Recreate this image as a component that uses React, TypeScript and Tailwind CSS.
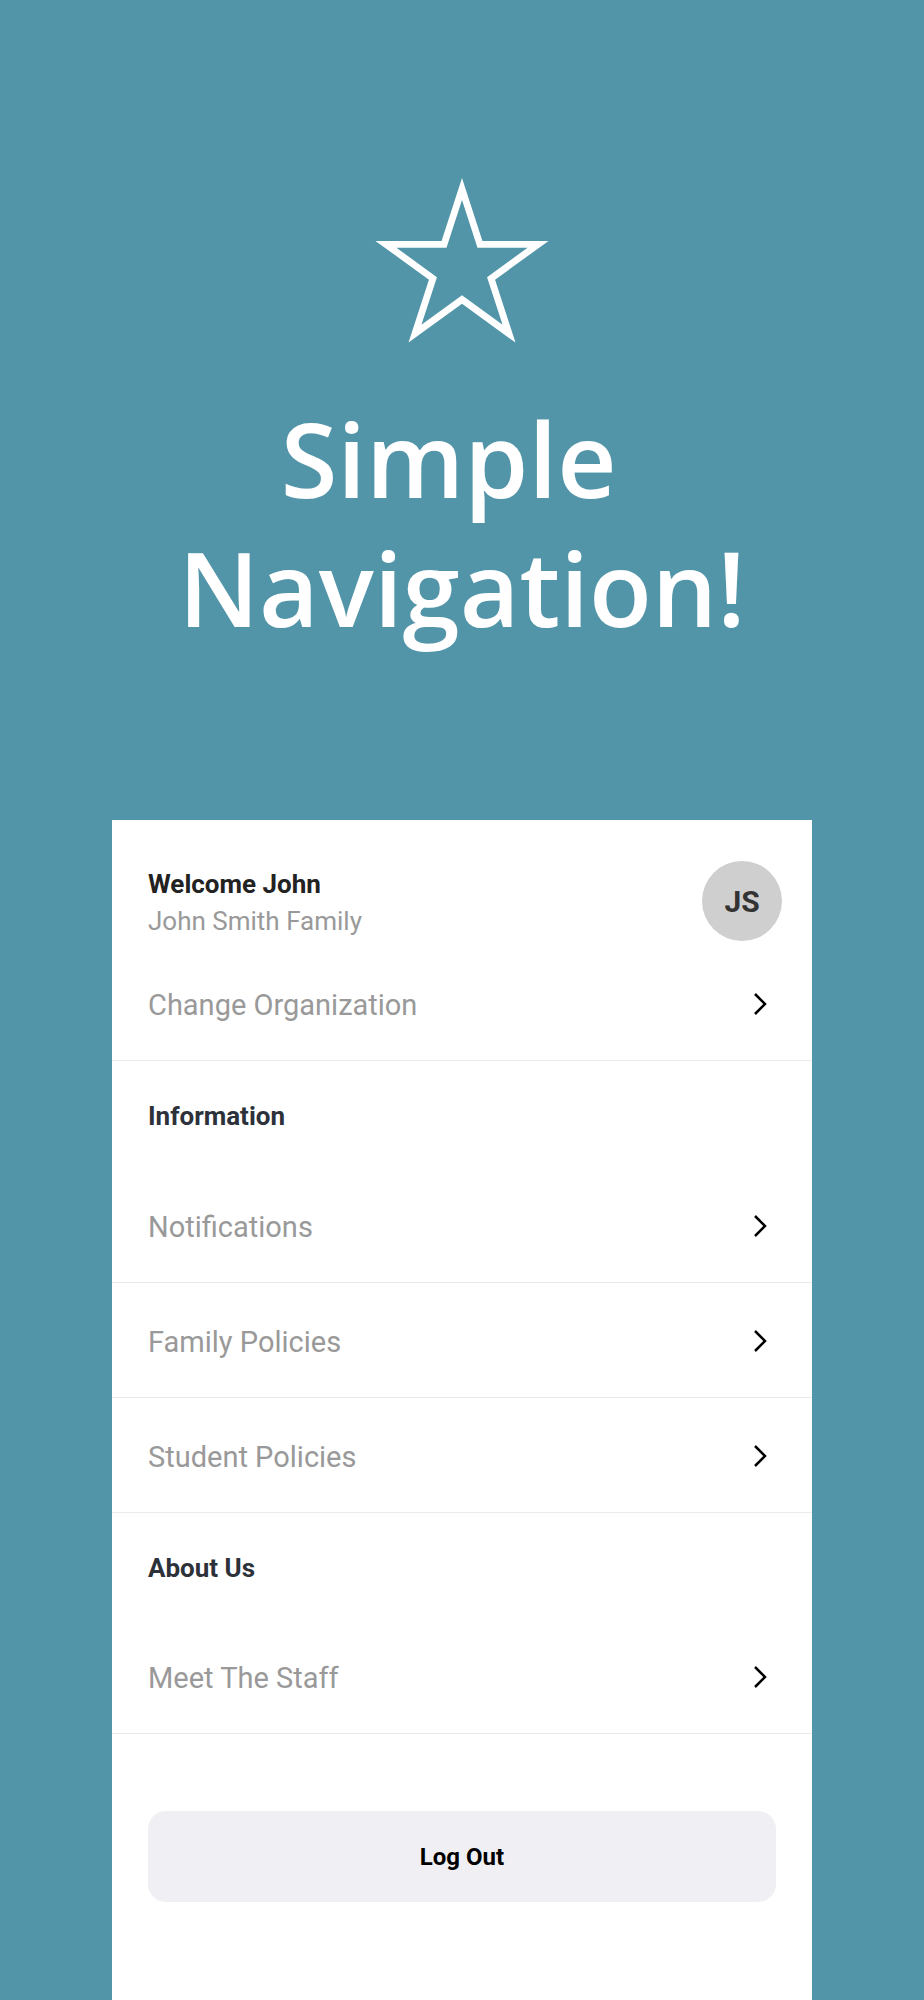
import React from "react";

// 10 points of a regular star, alternating outer tip / inner notch
function starPath(cx: number, cy: number, R: number) {
    const r = R * 0.382;
    const pts: string[] = [];
    for (let i = 0; i < 10; i++) {
        const rad = i % 2 === 0 ? R : r;
        const a = (-90 + i * 36) * (Math.PI / 180);
        pts.push(`${(cx + rad * Math.cos(a)).toFixed(2)} ${(cy + rad * Math.sin(a)).toFixed(2)}`);
    }
    return "M" + pts.join(" L") + " Z";
}

function StarOutline() {
    return (
        <svg width="184" height="170" viewBox="0 0 184 170" className="block mx-auto">
            <path d={starPath(92, 92, 91) + " " + starPath(92, 92, 69)} fill="#ffffff" fillRule="evenodd" />
        </svg>
    );
}

function Chevron() {
    return (
        <svg width="16" height="26" viewBox="0 0 16 26" className="shrink-0 mt-[2px]">
            <path d="M3 3 L13 13 L3 23" fill="none" stroke="#000000" strokeWidth="2.5" />
        </svg>
    );
}

function Row({ label }: { label: string }) {
    return (
        <div className="h-[115px] flex items-center justify-between pl-9 pr-[44px] border-b border-[#ebebeb]">
            <span className="mt-[5px] text-[29px] text-[#999999]">{label}</span>
            <Chevron />
        </div>
    );
}

function SectionTitle({ title, height }: { title: string; height: string }) {
    return (
        <div className={`${height} flex items-center pl-9 pt-[4px]`}>
            <span className="text-[26px] font-bold text-[#2c313a]">{title}</span>
        </div>
    );
}

export default function App() {
    const infoItems = ["Notifications", "Family Policies", "Student Policies"];

    return (
        <div className="min-h-[2000px] bg-[#5295a9] flex flex-col" style={{ fontFamily: "Roboto, 'Liberation Sans', sans-serif" }}>
            {/* --- Hero --- */}
            <div className="mt-[177px]">
                <StarOutline />
            </div>
            <h1
                className="mt-[47px] text-center text-white text-[103px] leading-[129px] font-semibold"
                style={{ fontFamily: "'Open Sans', 'Noto Sans', sans-serif" }}
            >
                {"Simple\u00a0"}
                <br />
                Navigation!
            </h1>

            {/* --- Menu card --- */}
            <div className="mt-[168px] w-[700px] mx-auto bg-white flex-1">
                <div className="flex justify-between items-start pl-9 pr-[30px] pt-[47px] pb-[5px]">
                    <div className="leading-[34px]">
                        <div className="text-[26px] font-bold text-[#222222]">Welcome John</div>
                        <div className="mt-[3px] text-[26px] text-[#999999]">John Smith Family</div>
                    </div>
                    <div className="-mt-[6px] w-20 h-20 rounded-full bg-[#cfcfcf] flex items-center justify-center text-[30px] font-bold text-[#333333]">
                        JS
                    </div>
                </div>
                <Row label="Change Organization" />

                <SectionTitle title="Information" height="h-[107px]" />
                {infoItems.map((item) => (
                    <Row key={item} label={item} />
                ))}

                <SectionTitle title="About Us" height="h-[106px]" />
                <Row label="Meet The Staff" />

                <div className="px-9 pt-[77px] pb-[120px]">
                    <button className="w-full h-[91px] rounded-[18px] bg-[#f0f0f4] text-[24px] font-bold text-black">
                        Log Out
                    </button>
                </div>
            </div>
        </div>
    );
}
